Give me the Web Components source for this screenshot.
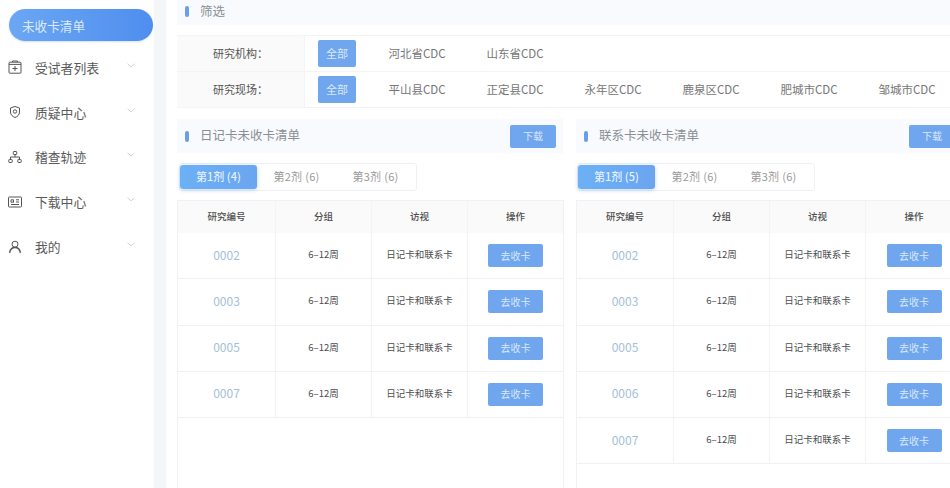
<!DOCTYPE html>
<html>
<head>
<meta charset="utf-8">
<title>未收卡清单</title>
<style>
html,body{margin:0;height:100%;overflow:hidden;background:#f5f6f8;}
body{font-family:"Noto Sans CJK SC","Liberation Sans",sans-serif;color:#555;}
</style>
</head>
<body>
<app-shell>
  <side-nav slot="nav">
    <nav-item icon="list">受试者列表</nav-item>
    <nav-item icon="shield">质疑中心</nav-item>
    <nav-item icon="tree">稽查轨迹</nav-item>
    <nav-item icon="card">下载中心</nav-item>
    <nav-item icon="user">我的</nav-item>
  </side-nav>
  <filter-panel></filter-panel>
  <card-list title="日记卡未收卡清单" counts="4,6,6" ids="0002,0003,0005,0007"></card-list>
  <card-list title="联系卡未收卡清单" counts="5,6,6" ids="0002,0003,0005,0006,0007"></card-list>
</app-shell>
<script>
const icons={
    list:'<rect x="2" y="3.200" width="12" height="11" rx=".8"/><path d="M2 5.400h12M5.500 3V2h5v1M8 7v5M5.500 9.500h5"/>',
    shield:'<path d="M8 2.500l4.500 1.500v4c0 2.800-2 4.600-4.500 5.500C5.500 12.600 3.500 10.800 3.500 8V4z"/><circle cx="8" cy="7.500" r="1.700"/>',
    tree:'<rect x="6.300" y="2.500" width="3.400" height="3" rx=".6"/><rect x="1.800" y="10.500" width="3.400" height="3" rx=".6"/><rect x="10.800" y="10.500" width="3.400" height="3" rx=".6"/><path d="M8 5.500V8M3.500 10.500V8h9v2.500"/>',
    card:'<rect x="1.500" y="3" width="13" height="10" rx=".8"/><path d="M4 5.800h2.500v2.400H4zM9 5.800h3M9 8h3M4 10.500h8"/>',
    user:'<circle cx="8" cy="5.200" r="3"/><path d="M2.600 13.800c.5-3.300 2.500-5.300 5.400-5.300s4.900 2 5.400 5.300" stroke-width="1.400"/>'
}

class AppShell extends HTMLElement{
    constructor(){
        super()
        this.attachShadow({mode:'open'}).innerHTML=`
        <style>
            :host{display:flex;height:488px;width:950px;overflow:hidden;}
            .side{flex:0 0 154px;background:#fff;}
            .gutter{flex:0 0 12px;background:#f5f6f8;}
            main{flex:0 0 784px;background:#fff;padding-left:11px;box-sizing:border-box;overflow:hidden;
                display:grid;grid-template-columns:387px 387px;column-gap:12px;grid-template-rows:auto 1fr;align-content:start;}
            ::slotted(filter-panel){grid-column:1 / -1;}
        </style>
        <div class="side"><slot name="nav"></slot></div>
        <div class="gutter"></div>
        <main><slot></slot></main>
        `
    }
}

class SideNav extends HTMLElement{
    constructor(){
        super()
        this.attachShadow({mode:'open'}).innerHTML=`
        <style>
            :host{display:block;padding:9px 1px 0 9px;}
            .pill{height:32px;border-radius:16px;line-height:34px;padding-left:13px;font-size:12.600px;color:#dbe9fd;
                background:linear-gradient(90deg,#6ba7f3,#4f8eef);margin-bottom:4px;box-shadow:0 1px 2px rgba(80,140,240,.25);}
            .items{margin-left:-9px;}
        </style>
        <div class="pill">未收卡清单</div>
        <div class="items"><slot></slot></div>
        `
    }
}

class NavItem extends HTMLElement{
    constructor(){
        super()
        this.attachShadow({mode:'open'}).innerHTML=`
        <style>
            :host{display:flex;align-items:center;height:44.800px;font-size:12.800px;color:#5a5a5a;}
            svg.ic{width:16px;height:16px;margin-left:7px;fill:none;stroke:#555;stroke-width:1;flex:none;}
            .t{margin-left:12px;flex:1;}
            svg.ch{width:8px;height:5px;margin-right:18px;fill:none;stroke:#cfd3d9;stroke-width:1;flex:none;margin-top:-4px;}
        </style>
        <svg class="ic" viewBox="0 0 16 16">${icons[this.getAttribute('icon')]}</svg>
        <span class="t"><slot></slot></span>
        <svg class="ch" viewBox="0 0 8 5"><path d="M.5 .8L4 3.800 7.500 .8"/></svg>
        `
    }
}

class SectionHead extends HTMLElement{
    constructor(){
        super()
        this.attachShadow({mode:'open'}).innerHTML=`
        <style>
            :host{display:flex;align-items:center;background:#f8fafd;box-sizing:border-box;padding-left:8px;color:#8a8f96;font-size:12.500px;}
            i{width:4px;height:11px;border-radius:2px;background:#6a9fe6;margin-right:11px;flex:none;}
            span{flex:1;padding-bottom:3px;}
        </style>
        <i></i><span><slot></slot></span><slot name="action"></slot>
        `
    }
}

class BlueButton extends HTMLElement{
    constructor(){
        super()
        this.attachShadow({mode:'open'}).innerHTML=`
        <style>
            :host{display:inline-flex;align-items:center;justify-content:center;background:#6fa6ee;color:#d9e8fc;border-radius:2px;font-size:11px;box-sizing:border-box;padding-bottom:1px;}
        </style>
        <slot></slot>
        `
    }
}

class FilterPanel extends HTMLElement{
    constructor(){
        super()
        const row=(label,opts)=>`
            <div class="row">
                <div class="label">${label}：</div>
                <div class="opts">
                    <blue-button class="all">全部</blue-button>
                    ${opts.map(o=>`<span class="opt">${o}</span>`).join('')}
                </div>
            </div>`
        this.attachShadow({mode:'open'}).innerHTML=`
        <style>
            :host{display:block;}
            section-head{height:25px;padding-bottom:2px;}
            .box{margin:10px 0 11px 0;border-top:1px solid #f3f4f6;width:790px;}
            .row{display:flex;height:36px;box-sizing:border-box;border-bottom:1px solid #f3f4f6;}
            .label{width:128px;background:#fafafa;border-right:1px solid #f3f4f6;box-sizing:border-box;text-align:center;line-height:35px;font-size:11px;color:#555;}
            .opts{display:flex;align-items:center;padding-left:13px;}
            .all{width:38px;height:27px;margin-right:12px;}
            .opt{width:98px;text-align:center;font-size:11.500px;color:#777;flex:none;padding-bottom:2px;}
        </style>
        <section-head>筛选</section-head>
        <div class="box">
            ${row('研究机构',['河北省CDC','山东省CDC'])}
            ${row('研究现场',['平山县CDC','正定县CDC','永年区CDC','鹿泉区CDC','肥城市CDC','邹城市CDC'])}
        </div>
        `
    }
}

class CardList extends HTMLElement{
    constructor(){
        super()
        const counts=this.getAttribute('counts').split(',')
        const ids=this.getAttribute('ids').split(',')
        const tabs=counts.map((c,i)=>`<span class="tab${i==0?' on':''}">第${i+1}剂 (${c})</span>`).join('')
        const rows=ids.map(id=>`
            <div class="tr">
                <div class="td id">${id}</div>
                <div class="td">6–12周</div>
                <div class="td">日记卡和联系卡</div>
                <div class="td act"><blue-button class="go">去收卡</blue-button></div>
            </div>`).join('')
        this.attachShadow({mode:'open'}).innerHTML=`
        <style>
            :host{display:block;}
            section-head{height:34px;margin-right:1px;padding-right:7px;}
            .dl{width:46px;height:23px;font-size:10px;}
            .tabs{display:inline-flex;align-items:center;height:28px;width:238px;margin:10px 0 9px 2px;box-sizing:border-box;
                border:1px solid #eef0f3;border-radius:3px;}
            :host(:last-of-type) .tabs{margin-left:1px;}
            .tab{flex:none;width:79px;text-align:center;font-size:11px;color:#999;padding-bottom:2px;letter-spacing:.3px;}
            .tab.on{width:77px;height:24px;line-height:23px;padding-bottom:0;letter-spacing:0;border-radius:3px;color:#e3f0ff;font-weight:500;
                background:linear-gradient(90deg,#6db0f5,#6aa6f0);box-shadow:0 1px 4px rgba(100,165,240,.45);}
            .table{width:387px;height:300px;box-sizing:border-box;border-left:1px solid #f0f1f4;border-right:1px solid #f0f1f4;border-top:1px solid #f0f1f4;}
            .tr{display:grid;grid-template-columns:98px 96px 96px 95px;height:46.250px;border-bottom:1px solid #f0f1f4;box-sizing:border-box;}
            :host(:last-of-type) .tr{grid-template-columns:97px 96px 96px 96px;}
            .th{height:32px;background:#fafafa;border-bottom:0;}
            .td{display:flex;align-items:center;justify-content:center;border-right:1px solid #f3f4f6;font-size:9.500px;color:#4d4d4d;min-width:0;padding-bottom:3px;}
            .td:last-child{border-right:0;}
            .act{padding-bottom:0;}
            .id{font-size:12px;color:#a3bfd8;}
            .th .td{font-weight:500;color:#4d4d4d;}
            .go{width:55px;height:23px;font-size:10px;}
        </style>
        <section-head>${this.getAttribute('title')}<blue-button class="dl" slot="action">下载</blue-button></section-head>
        <div class="tabs">${tabs}</div>
        <div class="table">
            <div class="tr th">
                <div class="td">研究编号</div><div class="td">分组</div><div class="td">访视</div><div class="td">操作</div>
            </div>
            ${rows}
        </div>
        `
    }
}

window.customElements.define('app-shell',AppShell)
window.customElements.define('side-nav',SideNav)
window.customElements.define('nav-item',NavItem)
window.customElements.define('section-head',SectionHead)
window.customElements.define('blue-button',BlueButton)
window.customElements.define('filter-panel',FilterPanel)
window.customElements.define('card-list',CardList)
</script>
</body>
</html>
